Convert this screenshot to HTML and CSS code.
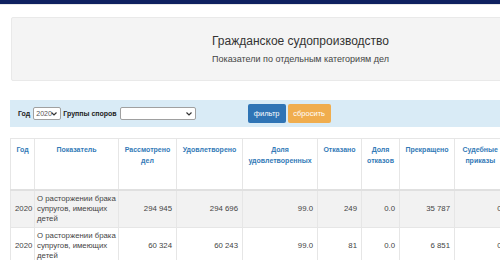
FILE: index.html
```html
<!DOCTYPE html>
<html lang="ru">
<head>
    <meta charset="UTF-8">
    <meta name="viewport" content="width=device-width, initial-scale=1.0">
    <title>Гражданское судопроизводство</title>
    <link rel="stylesheet" href="styles.css">
</head>
<body>
    <div class="topbar"></div>
    <div class="container">
        <div class="jumbotron">
            <h1>Гражданское судопроизводство</h1>
            <p>Показатели по отдельным категориям дел</p>
        </div>
        <form class="filter">
            <label>Год</label>
            <select class="yearSelect">
                <option>2020</option>
            </select>
            <label>Группы споров</label>
            <select class="groupSelect">
                <option></option>
            </select>
            <button type="button" class="btn btnFilter">фильтр</button>
            <button type="button" class="btn btnReset">сбросить</button>
        </form>
        <table class="stats">
            <thead>
                <tr>
                    <th class="colYear">Год</th>
                    <th class="colName">Показатель</th>
                    <th class="colA">Рассмотрено дел</th>
                    <th class="colB">Удовлетворено</th>
                    <th class="colC">Доля удовлетворенных</th>
                    <th class="colD">Отказано</th>
                    <th class="colE">Доля отказов</th>
                    <th class="colF">Прекращено</th>
                    <th class="colG">Судебные приказы</th>
                </tr>
            </thead>
            <tbody>
                <tr class="odd">
                    <td>2020</td>
                    <td class="name">О расторжении брака супругов, имеющих детей</td>
                    <td class="num">294 945</td>
                    <td class="num">294 696</td>
                    <td class="num">99.0</td>
                    <td class="num">249</td>
                    <td class="num">0.0</td>
                    <td class="num">35 787</td>
                    <td class="num">0</td>
                </tr>
                <tr>
                    <td>2020</td>
                    <td class="name">О расторжении брака супругов, имеющих детей</td>
                    <td class="num">60 324</td>
                    <td class="num">60 243</td>
                    <td class="num">99.0</td>
                    <td class="num">81</td>
                    <td class="num">0.0</td>
                    <td class="num">6 851</td>
                    <td class="num">0</td>
                </tr>
            </tbody>
        </table>
    </div>
</body>
</html>
```

FILE: styles.css
```css
body {
    font-family: "Liberation Sans", Arial, sans-serif;
    margin: 0;
    padding: 0;
    background: #fff;
    color: #333;
    overflow: hidden;
}

.topbar {
    height: 4px;
    background-color: #0f2160;
    border-bottom: 1px solid #e8e8e8;
}

.container {
    width: 580px;
    padding-left: 10px;
}

.jumbotron {
    margin: 12px 0 0 1px;
    height: 62px;
    background: #f4f4f4;
    border: 1px solid #e9e9e9;
    border-radius: 2px;
    text-align: center;
    display: flex;
    flex-direction: column;
    justify-content: center;
}

.jumbotron h1 {
    font-size: 12px;
    font-weight: normal;
    margin: 0 0 6px;
    color: #333;
}

.jumbotron p {
    font-size: 9px;
    margin: 0;
    color: #444;
}

.filter {
    margin-top: 19px;
    height: 27px;
    background: #d9ebf6;
    display: flex;
    align-items: center;
    padding-left: 8px;
    font-size: 7px;
}

.filter label {
    font-weight: bold;
    color: #222;
    margin-right: 3px;
}

.filter select {
    appearance: none;
    font-family: "Liberation Sans", Arial, sans-serif;
    font-size: 7px;
    height: 13px;
    padding: 0 0 0 2px;
    border: 1px solid #a0a0a0;
    border-radius: 2px;
    background: #fff url("data:image/svg+xml;utf8,<svg xmlns='http://www.w3.org/2000/svg' width='6' height='4'><path d='M0.5 0.5 L3 3 L5.5 0.5' fill='none' stroke='%23333' stroke-width='1.2'/></svg>") no-repeat right 3px center;
    color: #555;
    margin-right: 2px;
}

.yearSelect {
    width: 28px;
}

.groupSelect {
    width: 76px;
}

.btn {
    font-family: "Liberation Sans", Arial, sans-serif;
    font-size: 7.5px;
    height: 19px;
    border: none;
    border-radius: 2px;
    color: #fff;
    padding: 0;
    cursor: pointer;
}

.btnFilter {
    background-color: #2f74b5;
    width: 38px;
    margin-left: 50px;
}

.btnReset {
    background-color: #f0ad4e;
    width: 43px;
    margin-left: 2px;
}

.stats {
    margin-top: 11px;
    border-collapse: collapse;
    font-size: 7.8px;
    table-layout: fixed;
    width: 495px;
}

.stats th,
.stats td {
    box-sizing: border-box;
}

.stats th {
    color: #337ab7;
    font-size: 7px;
    font-weight: bold;
    text-align: center;
    vertical-align: top;
    padding: 5px 2px 0;
    height: 51px;
    line-height: 11px;
    border-top: 1px solid #e6e6e6;
    border-left: 1px solid #e6e6e6;
    border-bottom: 2px solid #e0e0e0;
}

.stats td {
    border-left: 1px solid #e6e6e6;
    border-bottom: 1px solid #e6e6e6;
    padding: 3px 4px;
    line-height: 10px;
    color: #444;
    vertical-align: middle;
    height: 37px;
}

.stats td.name {
    padding: 3px 0 3px 2px;
}

.stats tr.odd td {
    background: #f2f2f2;
}

.stats td.num {
    text-align: right;
}

.colYear { width: 24px; }
.colName { width: 84px; }
.colA { width: 58px; }
.colB { width: 66px; }
.colC { width: 75px; }
.colD { width: 44px; }
.colE { width: 38px; }
.colF { width: 55px; }
.colG { width: 51px; }
```
